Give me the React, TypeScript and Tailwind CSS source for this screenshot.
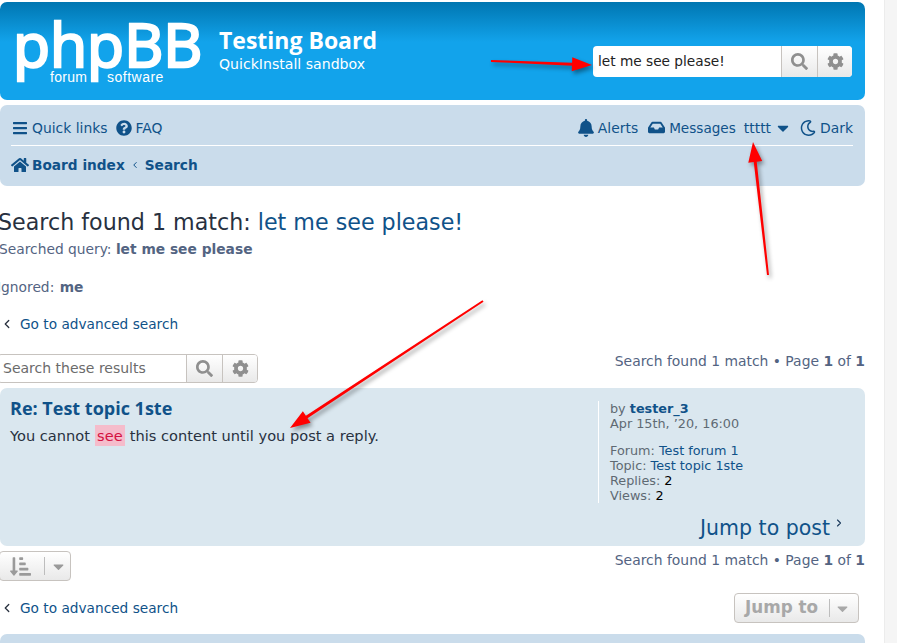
import { FaBars, FaQuestionCircle, FaHome, FaBell, FaInbox, FaRegMoon, FaCaretDown, FaSearch, FaCog, FaSortAmountDownAlt } from "react-icons/fa";
import { ChevronLeft, ChevronRight } from "lucide-react";

const link = "text-[#105289]";

function SearchButtons() {
  return (
    <>
      <div className="flex items-center justify-center w-[36px] h-full border-l border-[#c7c3bf] bg-gradient-to-b from-white to-[#e9e9e9]">
        <FaSearch className="text-[#8f8f8f] text-[17px]" />
      </div>
      <div className="flex items-center justify-center w-[35px] h-full border-l border-[#c7c3bf] bg-gradient-to-b from-white to-[#e9e9e9]">
        <FaCog className="text-[#8f8f8f] text-[17px]" />
      </div>
    </>
  );
}

function Pagination({ className = "" }: { className?: string }) {
  return (
    <div className={`text-[13.9px] leading-[18px] text-[#536482] text-right ${className}`}>
      Search found 1 match • Page <b>1</b> of <b>1</b>
    </div>
  );
}

function AdvancedLink() {
  return (
    <div className="flex items-center text-[13.7px] leading-[18px] text-[#105289]">
      <ChevronLeft size={14} strokeWidth={2.2} className="text-[#28313f] mr-[5px]" />
      <span className="ml-[1px]">Go to advanced search</span>
    </div>
  );
}

function Arrow({ x1, y1, x2, y2 }: { x1: number; y1: number; x2: number; y2: number }) {
  const len = Math.hypot(x2 - x1, y2 - y1);
  const ux = (x2 - x1) / len;
  const uy = (y2 - y1) / len;
  const bx = x2 - ux * 20;
  const by = y2 - uy * 20;
  const px = -uy;
  const py = ux;
  return (
    <polygon
      points={`${x1 + px},${y1 + py} ${bx + px * 1.5},${by + py * 1.5} ${bx + px * 7},${by + py * 7} ${x2},${y2} ${bx - px * 7},${by - py * 7} ${bx - px * 1.5},${by - py * 1.5} ${x1 - px},${y1 - py}`}
      fill="#f00"
    />
  );
}

export default function App() {
  return (
    <div className="relative w-[897px] h-[643px] overflow-hidden bg-white flex font-['DejaVu_Sans',sans-serif] text-[#333]">
      <div className="w-[865px] shrink-0 pt-[2px]">
        {/* Header */}
        <div className="h-[98px] rounded-[7px] bg-[linear-gradient(to_bottom,#0076b1_0,#12a3eb_40px)] flex text-white">
          <div className="relative w-[219px] h-full shrink-0 overflow-hidden">
            <div className="absolute left-[13px] top-[12px] text-[60.5px] leading-[60px] font-['Open_Sans',sans-serif] [-webkit-text-stroke:2.5px_white]">phpBB</div>
            <div className="absolute left-[50px] top-[68px] text-[14px] leading-[14px] tracking-[0.3px] font-['Liberation_Sans',sans-serif]">forum</div>
            <div className="absolute left-[107px] top-[68px] text-[14px] leading-[14px] tracking-[0.5px] font-['Liberation_Sans',sans-serif]">software</div>
          </div>
          <div className="pt-[24px]">
            <div className="text-[23px] leading-[30px] font-bold font-['Open_Sans',sans-serif] -mt-[1px]">Testing Board</div>
            <div className="text-[14.1px] leading-[18px]">QuickInstall sandbox</div>
          </div>
          <div className="ml-auto mr-[13px] mt-[44px] h-[31px] w-[259px] flex rounded-[4px] overflow-hidden bg-white">
            <div className="flex-1 pl-[5px] text-[13.7px] leading-[31px] text-[#222]">let me see please!</div>
            <SearchButtons />
          </div>
        </div>

        {/* Navbar */}
        <div className="mt-[5px] h-[81px] rounded-[7px] bg-[#cadceb] pl-[11px] pr-[12px] text-[#105289] text-[13.9px]">
          <div className="h-[41px] border-b border-white flex items-center justify-between pt-[6px]">
            <div className="flex items-center">
              <FaBars className="text-[16px] ml-px mr-[4px]" />
              <span>Quick links</span>
              <FaQuestionCircle className="text-[16px] ml-[8px] mr-[4px]" />
              <span>FAQ</span>
            </div>
            <div className="flex items-center">
              <FaBell className="text-[18px] mr-[3px]" />
              <span>Alerts</span>
              <FaInbox className="text-[17px] ml-[10px] mr-[4px]" />
              <span className="text-[13.6px]">Messages</span>
              <span className="ml-[8px]">ttttt</span>
              <FaCaretDown className="text-[18px] ml-[3px]" />
              <FaRegMoon className="text-[16px] ml-[8px] mr-[4px]" />
              <span>Dark</span>
            </div>
          </div>
          <div className="flex items-center h-[38px] font-bold text-[13.7px]">
            <FaHome className="text-[18px] mr-[3px]" />
            <span>Board index</span>
            <ChevronLeft size={10} strokeWidth={2.4} className="mx-[5px]" />
            <span>Search</span>
          </div>
        </div>

        {/* Heading and query */}
        <h2 className="-ml-[2px] mt-[20px] text-[22.2px] leading-[32px] text-[#28313f]">
          Search found 1 match: <span className={link}>let me see please!</span>
        </h2>
        <p className="-ml-[1px] mt-[2px] text-[13.8px] leading-[18px] text-[#536482]">
          Searched query: <b>let me see please</b>
        </p>
        <p className="-ml-[3px] mt-[20px] text-[13.8px] leading-[18px] text-[#536482]">
          Ignored: <b className="ml-[1px]">me</b>
        </p>
        <div className="mt-[19px]">
          <AdvancedLink />
        </div>

        {/* Action bar */}
        <div className="mt-[21px] h-[29px] flex justify-between">
          <div className="-ml-[3px] w-[261px] flex rounded-[4px] overflow-hidden border border-[#c7c3bf] bg-white">
            <div className="flex-1 pl-[5px] text-[14px] leading-[27px] text-[#6b6b6b]">Search these results</div>
            <SearchButtons />
          </div>
          <Pagination className="-mt-[2px]" />
        </div>

        {/* Search result post */}
        <div className="mt-[5px] h-[158px] rounded-[7px] bg-[#dae7ef] pl-[10px] pr-[20px] pt-[9px] flex">
          <div className="flex-1">
            <h3 className="text-[18px] leading-[22px] font-bold text-[#105289] font-['Open_Sans',sans-serif]">Re: Test topic 1ste</h3>
            <p className="mt-[7px] text-[14.6px] leading-[20px] text-[#28313f]">
              You cannot <span className="bg-[#f5bccb] text-[#d31141] px-[2.5px] py-[2px]">see</span> this content until you post a reply.
            </p>
          </div>
          <div className="w-[247px] shrink-0">
            <div className="h-[102px] mt-[4px] border-l border-white pl-[11px] text-[12.8px] leading-[15px] text-[#5f6a73]">
              <div>by <b className={link}>tester_3</b></div>
              <div>Apr 15th, ’20, 16:00</div>
              <div className="mt-[12px]">Forum: <span className={link}>Test forum 1</span></div>
              <div>Topic: <span className={link}>Test topic 1ste</span></div>
              <div>Replies: <span className="text-black">2</span></div>
              <div>Views: <span className="text-black">2</span></div>
            </div>
            <div className="mt-[12px] flex justify-end text-[#105289] text-[20.5px] leading-[26px]">
              Jump to post
              <ChevronRight size={12} strokeWidth={2.2} className="mt-[2px] ml-[3px] text-[#1b3a5c]" />
            </div>
          </div>
        </div>

        {/* Bottom action bar */}
        <div className="mt-[5px] h-[30px] flex justify-between">
          <div className="-ml-[1px] w-[72px] flex items-center rounded-[4px] border border-[#c7c3bf] bg-gradient-to-b from-white to-[#e9e9e9] text-[#9a9a9a]">
            <FaSortAmountDownAlt className="text-[21px] ml-[10px]" />
            <div className="ml-[13px] h-[18px] border-l border-[#bdbdbd] pl-[5px] flex items-center">
              <FaCaretDown className="text-[17px]" />
            </div>
          </div>
          <Pagination />
        </div>

        <div className="h-[30px] mt-[12px] flex items-center justify-between">
          <AdvancedLink />
          <div className="mr-[6px] h-[30px] w-[125px] flex items-center rounded-[4px] border border-[#c7c3bf] bg-gradient-to-b from-white to-[#e9e9e9] text-[#a8a8a8]">
            <span className="ml-[10px] font-bold text-[16.8px]">Jump to</span>
            <div className="ml-auto mr-[7px] h-[18px] border-l border-[#bdbdbd] pl-[4px] flex items-center">
              <FaCaretDown className="text-[17px]" />
            </div>
          </div>
        </div>

        <div className="mt-[11px] h-[40px] rounded-t-[7px] bg-[#cadceb]" />
      </div>

      {/* Page gutter */}
      <div className="ml-[19px] flex-1 bg-[#f5f5f5] border-l border-[#ececec]" />

      {/* Annotation arrows */}
      <svg className="absolute inset-0 pointer-events-none drop-shadow-[2px_3px_2px_rgba(0,0,0,0.4)]" width="897" height="643">
        <Arrow x1={491} y1={61} x2={592} y2={65} />
        <Arrow x1={768} y1={275} x2={753} y2={142} />
        <Arrow x1={483} y1={301} x2={290} y2={428} />
      </svg>
    </div>
  );
}
